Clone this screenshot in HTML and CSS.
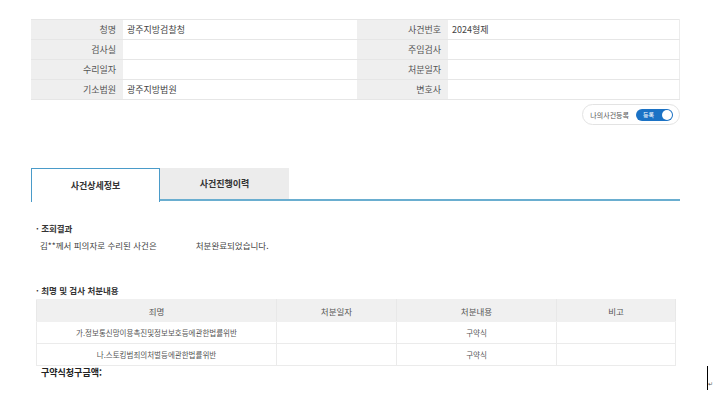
FILE: index.html
```html
<!DOCTYPE html>
<html lang="ko">
<head>
  <meta charset="UTF-8" />
  <title>사건조회</title>
  <link rel="stylesheet" href="styles.css">
</head>
<body>
  <div class="page">
    <table class="info-table">
      <colgroup>
        <col class="c-label"><col class="c-value"><col class="c-label2"><col>
      </colgroup>
      <tr><th>청명</th><td>광주지방검찰청</td><th>사건번호</th><td>2024형제</td></tr>
      <tr><th>검사실</th><td></td><th>주임검사</th><td></td></tr>
      <tr><th>수리일자</th><td></td><th>처분일자</th><td></td></tr>
      <tr><th>기소법원</th><td>광주지방법원</td><th>변호사</th><td></td></tr>
    </table>

    <div class="reg-row">
      <div class="reg-box">
        <span class="reg-label">나의사건등록</span>
        <span class="switch"><span class="switch-text">등록</span><span class="knob"></span></span>
      </div>
    </div>

    <div class="tabs">
      <div class="tab active">사건상세정보</div>
      <div class="tab">사건진행이력</div>
      <div class="tab-rest"></div>
    </div>

    <div class="section">
      <h3 class="sec-title">· 조회결과</h3>
      <p class="result"><span>김**께서 피의자로 수리된 사건은</span><span class="result-end">처분완료되었습니다.</span></p>
    </div>

    <div class="section sec2">
      <h3 class="sec-title">· 최명 및 검사 처분내용</h3>
      <table class="list-table">
        <colgroup>
          <col class="l1"><col class="l2"><col class="l3"><col>
        </colgroup>
        <tr><th>죄명</th><th>처분일자</th><th>처분내용</th><th>비고</th></tr>
        <tr><td>가.정보통신망이용촉진및정보보호등에관한법률위반</td><td></td><td>구약식</td><td></td></tr>
        <tr><td>나.스토킹범죄의처벌등에관한법률위반</td><td></td><td>구약식</td><td></td></tr>
      </table>
      <div class="amount">구약식청구금액:</div>
    </div>
    <span class="caret"></span><span class="enter">↵</span>
  </div>
</body>
</html>
```

FILE: styles.css
```css
body {
  margin: 0;
  background: #fff;
  font-family: "Noto Sans CJK KR", "Noto Sans", sans-serif;
  color: #444;
}
.page {
  position: relative;
  width: 715px;
  height: 398px;
  padding: 19px 0 0 31px;
  box-sizing: border-box;
}
.info-table {
  width: 649px;
  border-collapse: collapse;
  font-size: 9px;
  table-layout: fixed;
}
.c-label { width: 92px; }
.c-value { width: 234px; }
.c-label2 { width: 91px; }
.info-table th, .info-table td {
  height: 19px;
  padding: 0;
  border-top: 1px solid #e6e6e6;
  border-bottom: 1px solid #e6e6e6;
  font-weight: normal;
}
.info-table th {
  background: #efefef;
  text-align: right;
  padding-right: 7px;
  color: #555;
}
.info-table td {
  padding-left: 4px;
  color: #444;
}
.info-table tr td:last-child {
  border-right: 1px solid #ececec;
}
.reg-row {
  display: flex;
  justify-content: flex-end;
  width: 649px;
  margin-top: 4px;
}
.reg-box {
  display: flex;
  align-items: center;
  gap: 7px;
  height: 19px;
  padding: 0 6px 0 7px;
  border: 1px solid #e3e3e3;
  border-radius: 11px;
  font-size: 7px;
  color: #555;
}
.switch {
  display: flex;
  align-items: center;
  justify-content: space-between;
  width: 37px;
  height: 12px;
  padding: 0 1px 0 7px;
  box-sizing: border-box;
  background: #1b72c5;
  border-radius: 7px;
}
.switch-text {
  color: #fff;
  font-size: 6px;
}
.knob {
  width: 10px;
  height: 10px;
  background: #fff;
  border-radius: 50%;
}
.tabs {
  display: flex;
  width: 649px;
  margin-top: 43px;
  height: 33px;
}
.tab {
  width: 129px;
  display: flex;
  align-items: center;
  justify-content: center;
  font-size: 9px;
  font-weight: bold;
  color: #333;
  background: #ececec;
  border-bottom: 2px solid #6aaed0;
}
.tab.active {
  background: #fff;
  border: 1px solid #4a9bc9;
  border-bottom: none;
  height: 34px;
  box-sizing: border-box;
}
.tab-rest {
  flex: 1;
  border-bottom: 2px solid #6aaed0;
}
.section {
  padding-left: 5px;
}
.sec-title {
  margin: 21px 0 0;
  font-size: 8.5px;
  font-weight: bold;
  color: #333;
}
.result {
  margin: 5px 0 0 4px;
  font-size: 8.5px;
  color: #444;
  display: flex;
}
.result-end {
  margin-left: 39px;
}
.sec2 .sec-title {
  margin-top: 33px;
}
.list-table {
  margin-top: 3px;
  width: 640px;
  border-collapse: collapse;
  table-layout: fixed;
  font-size: 7.5px;
}
.l1 { width: 240px; }
.l2 { width: 120px; }
.l3 { width: 160px; }
.list-table th, .list-table td {
  height: 21px;
  padding: 0;
  text-align: center;
  border: 1px solid #ebebeb;
  color: #555;
}
.list-table th {
  background: #f0f0f0;
  font-weight: normal;
  font-size: 8.5px;
  border-color: #f0f0f0 #e8e8e8;
}
.amount {
  margin: 0 0 0 5px;
  font-size: 9px;
  font-weight: bold;
  color: #222;
}
.caret {
  position: absolute;
  left: 707px;
  top: 366px;
  width: 1px;
  height: 24px;
  background: #000;
}
.enter {
  position: absolute;
  left: 708px;
  top: 380px;
  font-size: 6px;
  line-height: 8px;
  color: #555;
}
```
